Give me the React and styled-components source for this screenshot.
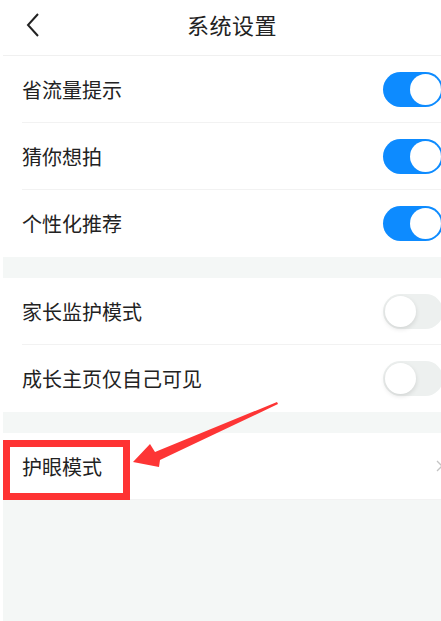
import React from 'react';
import styled, { createGlobalStyle } from 'styled-components';

const GlobalStyle = createGlobalStyle`
  html, body {
    margin: 0;
    padding: 0;
    background: #ffffff;
  }
  body {
    font-family: "Noto Sans CJK SC", "Noto Sans", sans-serif;
    color: #222;
  }
`;

const sections = [
  [
    { label: '省流量提示', on: true },
    { label: '猜你想拍', on: true },
    { label: '个性化推荐', on: true }
  ],
  [
    { label: '家长监护模式', on: false },
    { label: '成长主页仅自己可见', on: false }
  ]
];

const Toggle = ({ on }) => (
  <Track on={on ? 1 : 0}>
    <Knob on={on ? 1 : 0} />
  </Track>
);

const App = () => (
  <>
    <GlobalStyle />
    <Page>
      <Header>
        <Back>
          <svg width="16" height="26" viewBox="0 0 16 26">
            <path d="M13 2 L3 13 L13 24" fill="none" stroke="#222" strokeWidth="2" />
          </svg>
        </Back>
        <Title>系统设置</Title>
      </Header>
      {sections.map((rows, i) => (
        <React.Fragment key={i}>
          <Section>
            {rows.map(row => (
              <Row key={row.label}>
                <Label>{row.label}</Label>
                <Toggle on={row.on} />
              </Row>
            ))}
          </Section>
          <Gap />
        </React.Fragment>
      ))}
      <Section>
        <Row>
          <Label>护眼模式</Label>
          <Chevron>
            <svg width="8" height="12" viewBox="0 0 8 12">
              <path d="M1 1 L6 6 L1 11" fill="none" stroke="#c4c4c4" strokeWidth="1.3" />
            </svg>
          </Chevron>
        </Row>
        <Highlight />
      </Section>
      <Filler />
      <Arrow width="441" height="621" viewBox="0 0 441 621">
        <polygon
          points="133,462 150,444 155,452 277,402 278,404 160,460 159,467"
          fill="#fd3535"
        />
      </Arrow>
    </Page>
  </>
);

export default App;

const Page = styled.div`
  position: relative;
  width: 438px;
  height: 621px;
  margin-left: 3px;
  overflow: hidden;
  background: #f4f7f6;
  display: flex;
  flex-direction: column;
`;

const Header = styled.div`
  height: 55px;
  flex-shrink: 0;
  display: flex;
  align-items: center;
  justify-content: center;
  position: relative;
  background: #fff;
  border-bottom: 1px solid #f0f0f0;
`;

const Back = styled.div`
  position: absolute;
  left: 22px;
  top: 12px;
  display: flex;
`;

const Title = styled.div`
  font-size: 22px;
  color: #222;
  margin-left: 20px;
  margin-bottom: 8px;
  letter-spacing: 0.5px;
`;

const Section = styled.div`
  position: relative;
  background: #fff;
  flex-shrink: 0;
`;

const Row = styled.div`
  height: 67px;
  box-sizing: border-box;
  margin-left: 19px;
  display: flex;
  align-items: center;
  justify-content: space-between;
  border-bottom: 1px solid #f2f2f2;

  &:last-of-type {
    border-bottom: none;
  }
`;

const Label = styled.div`
  font-size: 20px;
  color: #222;
`;

const Track = styled.div`
  width: 60px;
  height: 35px;
  margin-right: -2px;
  border-radius: 18px;
  box-sizing: border-box;
  background: ${p => (p.on ? '#0d8bff' : '#edf0ef')};
  position: relative;
  display: flex;
  align-items: center;
  justify-content: ${p => (p.on ? 'flex-end' : 'flex-start')};
  padding: 2px;
`;

const Knob = styled.div`
  width: 31px;
  height: 31px;
  border-radius: 50%;
  background: #fff;
  box-shadow: ${p => (p.on ? 'none' : '0 2px 5px rgba(0,0,0,0.12)')};
`;

const Chevron = styled.div`
  display: flex;
  margin-right: -3px;
`;

const Gap = styled.div`
  height: 21px;
  flex-shrink: 0;
`;

const Filler = styled.div`
  flex: 1;
`;

const Highlight = styled.div`
  position: absolute;
  left: 0;
  top: 7px;
  width: 127px;
  height: 60px;
  box-sizing: border-box;
  border: 7px solid #fe3333;
`;

const Arrow = styled.svg`
  position: absolute;
  left: -3px;
  top: 0;
  pointer-events: none;
`;
